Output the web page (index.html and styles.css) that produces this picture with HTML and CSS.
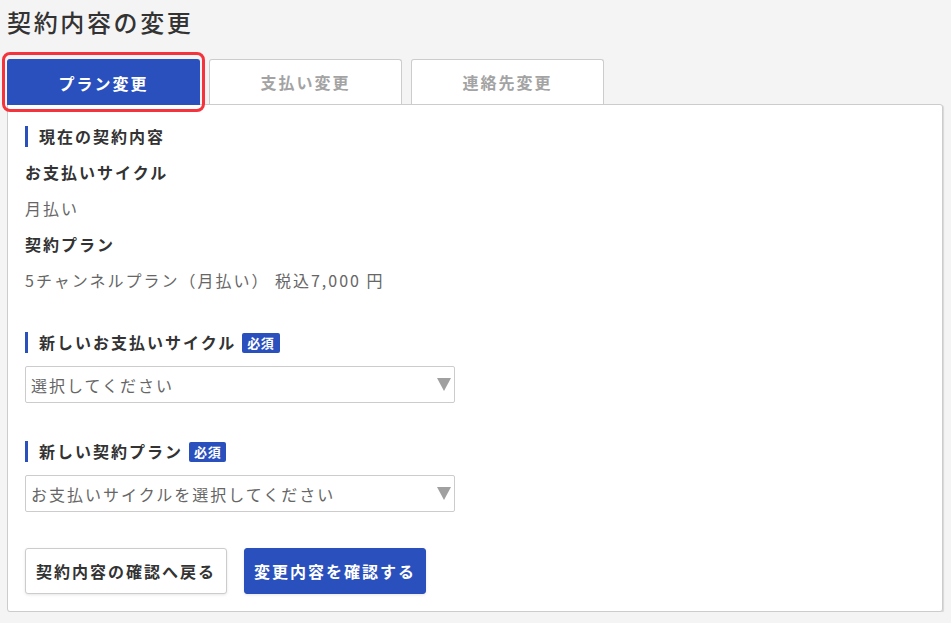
FILE: index.html
```html
<!DOCTYPE html>
<html lang="ja">
  <head>
    <meta charset="utf-8" />
    <meta name="viewport" content="width=device-width, initial-scale=1" />
    <title>契約内容の変更</title>
    <link rel="stylesheet" href="styles.css">
  </head>
  <body>
    <div class="page">
      <h1 class="page-title">契約内容の変更</h1>

      <div class="tabs">
        <a class="tab active" href="#plan">プラン変更</a>
        <a class="tab" href="#payment">支払い変更</a>
        <a class="tab" href="#contact">連絡先変更</a>
      </div>

      <div class="panel">
        <h2 class="sec-title">現在の契約内容</h2>
        <dl class="current">
          <dt>お支払いサイクル</dt>
          <dd>月払い</dd>
          <dt>契約プラン</dt>
          <dd>5チャンネルプラン（月払い） 税込7,000 円</dd>
        </dl>

        <div class="field">
          <h2 class="sec-title">新しいお支払いサイクル<span class="required">必須</span></h2>
          <div class="select-wrap">
            <select>
              <option>選択してください</option>
              <option>月払い</option>
              <option>年払い</option>
            </select>
          </div>
        </div>

        <div class="field">
          <h2 class="sec-title">新しい契約プラン<span class="required">必須</span></h2>
          <div class="select-wrap">
            <select>
              <option>お支払いサイクルを選択してください</option>
            </select>
          </div>
        </div>

        <div class="buttons">
          <button class="btn">契約内容の確認へ戻る</button>
          <button class="btn primary">変更内容を確認する</button>
        </div>
      </div>
    </div>
  </body>
</html>
```

FILE: styles.css
```css
body {
  margin: 0;
  background-color: #f4f4f4;
  color: #333;
  font-family: "Noto Sans CJK JP", "Noto Sans", sans-serif;
}

.page {
  padding: 4px 8px 0 7px;
}

.page-title {
  margin: 0;
  font-size: 24px;
  font-weight: 500;
  line-height: 36px;
  letter-spacing: 0.11em;
  color: #333;
}

/* tabs */
.tabs {
  display: flex;
  align-items: flex-start;
  gap: 9px;
  height: 45px;
  margin-top: 19px;
}

.tab {
  box-sizing: border-box;
  width: 193px;
  height: 45px;
  display: flex;
  align-items: center;
  justify-content: center;
  background-color: #fff;
  border: 1px solid #ccc;
  border-bottom: none;
  border-radius: 3px 3px 0 0;
  color: #a3a3a3;
  font-size: 16px;
  font-weight: 700;
  letter-spacing: 0.125em;
  text-decoration: none;
}

.tab.active {
  position: relative;
  z-index: 1;
  height: 46px;
  background-color: #2a50bd;
  border-color: #2a50bd;
  color: #fff;
}

.tab.active::after {
  content: "";
  position: absolute;
  top: -8px;
  left: -6px;
  right: -6px;
  bottom: -7px;
  border: 3px solid #f4333d;
  border-radius: 8px;
}

/* panel */
.panel {
  background-color: #fff;
  border: 1px solid #ccc;
  border-radius: 0 3px 3px 3px;
  box-shadow: 1px 1px 1px rgba(0, 0, 0, 0.12);
  padding: 21px 17px 17px;
}

.sec-title {
  display: flex;
  align-items: center;
  margin: 0;
  padding-left: 11px;
  border-left: 3px solid #2a50bd;
  font-size: 16px;
  font-weight: 700;
  line-height: 21px;
  letter-spacing: 0.125em;
}

.current {
  margin: 7px 0 0;
}

.current dt,
.current dd {
  margin: 0;
  font-size: 16px;
  line-height: 36px;
  letter-spacing: 0.125em;
}

.current dt {
  font-weight: 700;
}

.current dd {
  color: #666;
}

.field {
  margin-top: 34px;
}

.field + .field {
  margin-top: 38px;
}

.field .sec-title {
  margin-bottom: 13px;
}

.required {
  margin-left: 6px;
  padding: 0 5px;
  height: 20px;
  line-height: 20px;
  border-radius: 2px;
  background-color: #2a50bd;
  color: #fff;
  font-size: 13px;
  letter-spacing: 0.05em;
}

.select-wrap {
  position: relative;
  width: 430px;
}

.select-wrap select {
  appearance: none;
  -webkit-appearance: none;
  box-sizing: border-box;
  width: 100%;
  height: 37px;
  padding: 0 24px 0 5px;
  background-color: #fff;
  border: 1px solid #ccc;
  border-radius: 2px;
  color: #666;
  font-family: inherit;
  font-size: 16px;
  letter-spacing: 0.125em;
}

.select-wrap::after {
  content: "";
  position: absolute;
  right: 4px;
  top: 12px;
  border-left: 7px solid transparent;
  border-right: 7px solid transparent;
  border-top: 13px solid #a0a0a0;
  pointer-events: none;
}

/* buttons */
.buttons {
  display: flex;
  gap: 17px;
  margin-top: 36px;
}

.btn {
  height: 46px;
  padding: 0 10px;
  background-color: #fff;
  border: 1px solid #ccc;
  border-radius: 3px;
  box-shadow: 0 1px 3px rgba(0, 0, 0, 0.1);
  color: #333;
  font-family: inherit;
  font-size: 16px;
  font-weight: 700;
  letter-spacing: 0.125em;
}

.btn.primary {
  padding: 0 9px;
  background-color: #2a50bd;
  border-color: #2a50bd;
  color: #fff;
}
```
